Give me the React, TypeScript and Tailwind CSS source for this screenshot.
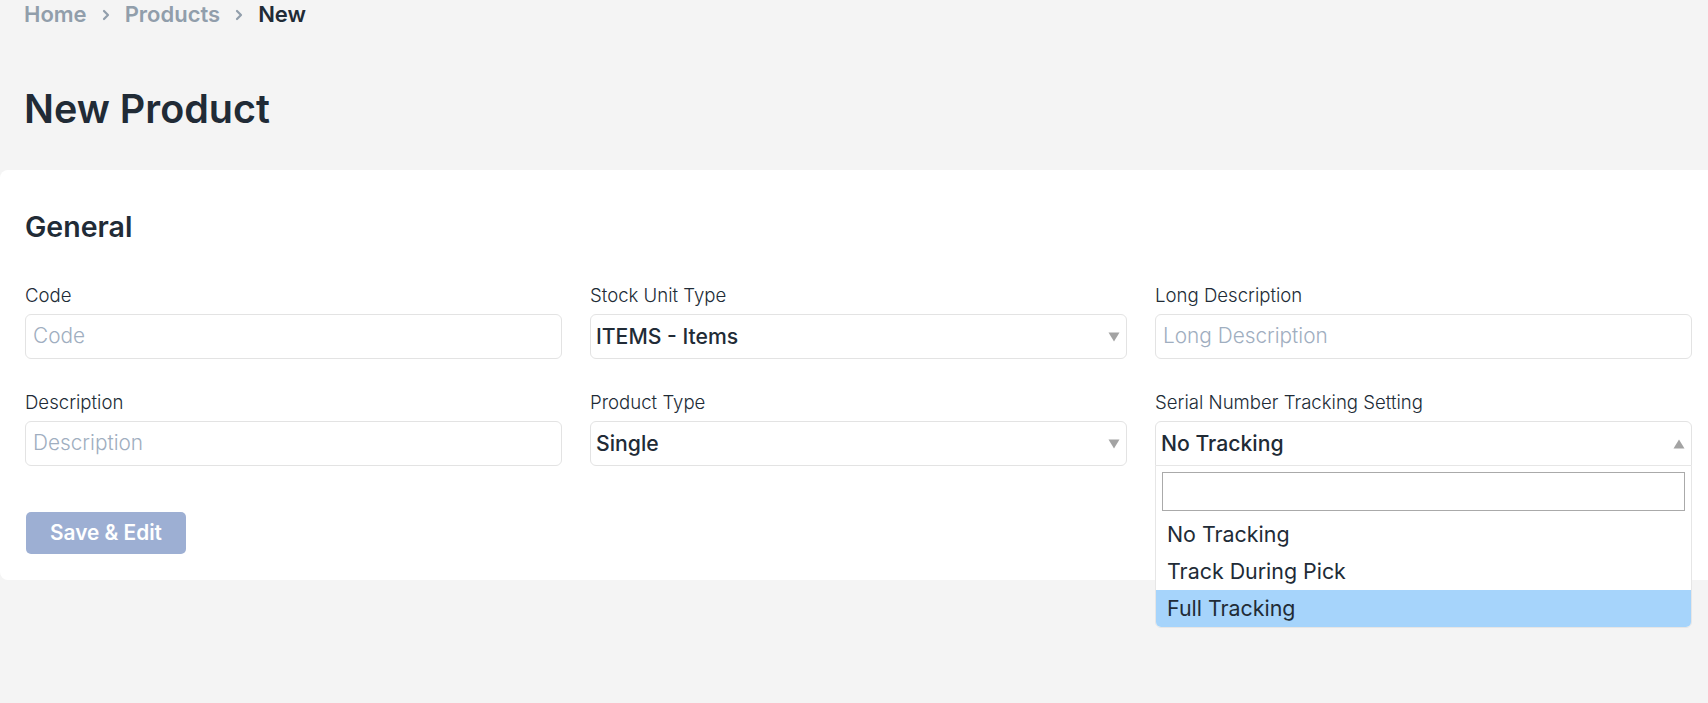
import React from "react";

function Chevron() {
  return (
    <svg width="8" height="12" viewBox="0 0 8 12" className="mt-[1px]">
      <path d="M2 2 L6 6 L2 10" fill="none" stroke="#919eab" strokeWidth="2.2" strokeLinecap="round" strokeLinejoin="round" />
    </svg>
  );
}

function Caret({ up = false }: { up?: boolean }) {
  return (
    <svg width="12" height="10" viewBox="0 0 12 10">
      {up ? <path d="M6 0.5 L11.5 9.5 L0.5 9.5 Z" fill="#a3a3a3" /> : <path d="M0.5 0.5 L11.5 0.5 L6 9.5 Z" fill="#a3a3a3" />}
    </svg>
  );
}

function Label({ children }: { children: React.ReactNode }) {
  return <div className="h-[24px] text-[18.6px] leading-[24px] font-light text-[#212b36] whitespace-nowrap">{children}</div>;
}

function TextField({ label, placeholder }: { label: string; placeholder: string }) {
  return (
    <div className="flex flex-col">
      <Label>{label}</Label>
      <div className="mt-[7px] h-[45px] rounded-[6px] border border-[#e3e3e3] bg-white flex items-center pl-[7px]">
        <span className="text-[20.8px] font-light text-[#a0aec0] leading-none">{placeholder}</span>
      </div>
    </div>
  );
}

function SelectField({ label, value }: { label: string; value: string }) {
  return (
    <div className="flex flex-col">
      <Label>{label}</Label>
      <div className="mt-[7px] h-[45px] rounded-[6px] border border-[#e3e3e3] bg-white flex items-center justify-between pl-[5px] pr-[6px]">
        <span className="text-[21.2px] font-medium text-[#212b36] leading-none">{value}</span>
        <Caret />
      </div>
    </div>
  );
}

function OpenSelectField({ label, value, options, active }: { label: string; value: string; options: string[]; active: number }) {
  return (
    <div className="flex flex-col">
      <Label>{label}</Label>
      <div className="relative mt-[7px]">
        <div className="h-[45px] rounded-t-[6px] border border-[#e3e3e3] bg-white flex items-center justify-between pl-[5px] pr-[6px]">
          <span className="text-[21.2px] font-medium text-[#212b36] leading-none">{value}</span>
          <Caret up />
        </div>
        <div className="absolute left-0 right-0 top-[44px] z-10 rounded-b-[6px] border border-[#e6e6e6] bg-white">
          <div className="px-[6px] pt-[6px] pb-[5px]">
            <div className="h-[39px] border border-[#aaaaaa] bg-white" />
          </div>
          <div className="flex flex-col">
            {options.map((o, i) => (
              <div
                key={o}
                className={
                  i === active
                    ? "h-[37px] leading-[37px] pl-[11px] text-[21.4px] text-[#212b36] bg-[#a6d4fb] rounded-b-[5px]"
                    : "h-[37px] leading-[37px] pl-[11px] text-[21.4px] text-[#212b36]"
                }
              >
                {o}
              </div>
            ))}
          </div>
        </div>
      </div>
    </div>
  );
}

export default function App() {
  return (
    <div className="min-h-screen bg-[#f4f4f4] font-['Inter',sans-serif] text-[#212b36] overflow-hidden">
      <div className="px-[24px]">
        <nav className="h-[28px] flex items-center gap-[15px] text-[22px] font-semibold leading-[28px]">
          <span className="text-[#919eab]">Home</span>
          <Chevron />
          <span className="text-[#919eab]">Products</span>
          <Chevron />
          <span className="text-[#212b36]">New</span>
        </nav>
        <h1 className="mt-[58px] h-[46px] text-[39.5px] leading-[46px] font-semibold text-[#212b36]">New Product</h1>
      </div>
      <div className="mt-[38px] rounded-l-[8px] bg-white pl-[25px] pr-[16px] pt-[40px] pb-[26px]">
        <h2 className="h-[34px] text-[28.5px] leading-[34px] font-semibold text-[#212b36]">General</h2>
        <div className="mt-[39px] grid grid-cols-3 gap-x-[28px] gap-y-[31px]">
          <TextField label="Code" placeholder="Code" />
          <SelectField label="Stock Unit Type" value="ITEMS - Items" />
          <TextField label="Long Description" placeholder="Long Description" />
          <TextField label="Description" placeholder="Description" />
          <SelectField label="Product Type" value="Single" />
          <OpenSelectField
            label="Serial Number Tracking Setting"
            value="No Tracking"
            options={["No Tracking", "Track During Pick", "Full Tracking"]}
            active={2}
          />
        </div>
        <button className="mt-[46px] ml-px h-[42px] w-[160px] rounded-[5px] bg-[#9dafd3] text-white text-[20.8px] font-semibold">
          Save &amp; Edit
        </button>
      </div>
    </div>
  );
}
